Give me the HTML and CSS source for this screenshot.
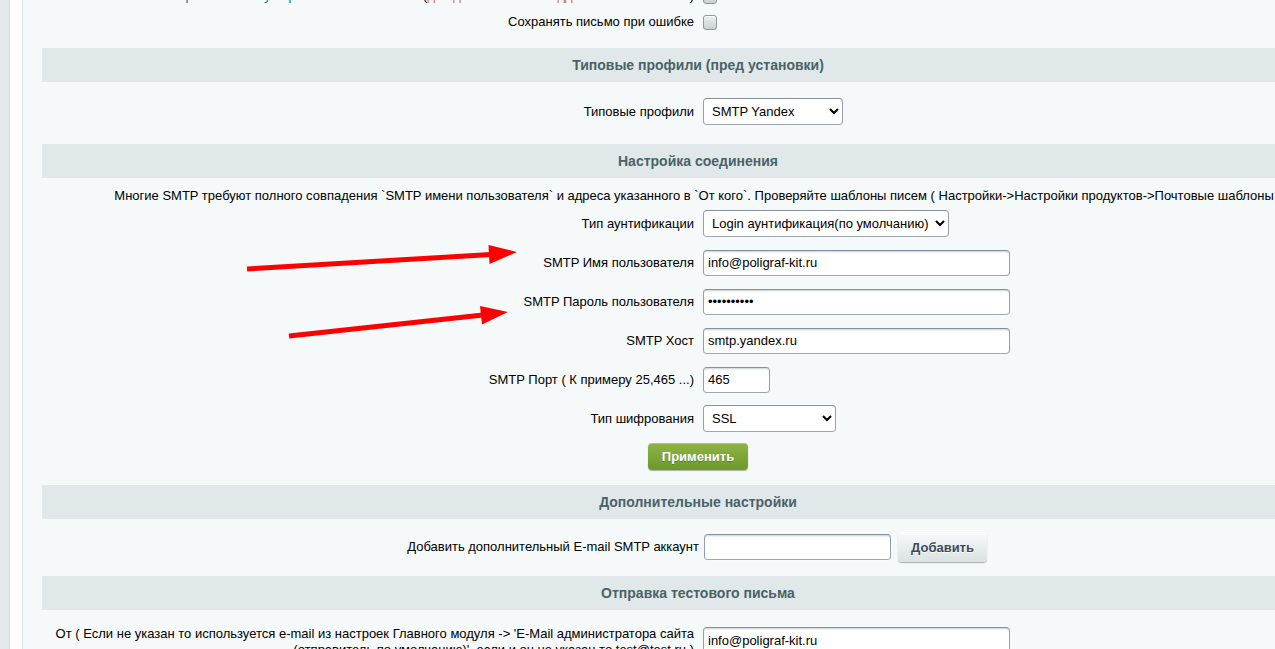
FILE: index.html
```html
<!DOCTYPE html>
<html lang="ru">
<head>
<meta charset="utf-8">
<title>SMTP</title>
<link rel="stylesheet" href="styles.css">
</head>
<body>
<div class="page">
  <div class="rail"></div>
  <div class="gutter"></div>
  <main class="workarea">
    <div class="form">
      <div class="row chk-row first">
        <div class="row-label"><span class="link">Отправлять почту через SMTP</span> все письма (<span class="warn">для домена и всех поддоменов</span> этого сайта)</div>
        <div class="row-ctl"><input type="checkbox" class="chk"></div>
      </div>
      <div class="row chk-row">
        <div class="row-label">Сохранять письмо при ошибке</div>
        <div class="row-ctl"><input type="checkbox" class="chk"></div>
      </div>

      <section class="block">
        <h2 class="section-title">Типовые профили (пред установки)</h2>
        <div class="section-body">
          <div class="row field">
            <div class="row-label">Типовые профили</div>
            <div class="row-ctl">
              <select class="sel sel-profile"><option>SMTP Yandex</option></select>
            </div>
          </div>
        </div>
      </section>

      <section class="block">
        <h2 class="section-title">Настройка соединения</h2>
        <div class="section-body">
          <p class="note">Многие SMTP требуют полного совпадения `SMTP имени пользователя` и адреса указанного в `От кого`. Проверяйте шаблоны писем ( Настройки-&gt;Настройки продуктов-&gt;Почтовые шаблоны )</p>
          <div class="row field">
            <div class="row-label">Тип аунтификации</div>
            <div class="row-ctl">
              <select class="sel sel-auth"><option>Login аунтификация(по умолчанию)</option></select>
            </div>
          </div>
          <div class="row field">
            <div class="row-label">SMTP Имя пользователя</div>
            <div class="row-ctl"><input type="text" class="txt txt-wide" value="info@poligraf-kit.ru"></div>
          </div>
          <div class="row field">
            <div class="row-label">SMTP Пароль пользователя</div>
            <div class="row-ctl"><input type="password" class="txt txt-wide" value="0123456789"></div>
          </div>
          <div class="row field">
            <div class="row-label">SMTP Хост</div>
            <div class="row-ctl"><input type="text" class="txt txt-wide" value="smtp.yandex.ru"></div>
          </div>
          <div class="row field">
            <div class="row-label">SMTP Порт ( К примеру 25,465 ...)</div>
            <div class="row-ctl"><input type="text" class="txt txt-port" value="465"></div>
          </div>
          <div class="row field">
            <div class="row-label">Тип шифрования</div>
            <div class="row-ctl">
              <select class="sel sel-enc"><option>SSL</option></select>
            </div>
          </div>
          <div class="btn-row">
            <button type="button" class="btn-save">Применить</button>
          </div>
        </div>
      </section>

      <section class="block">
        <h2 class="section-title">Дополнительные настройки</h2>
        <div class="section-body">
          <div class="row add-row">
            <div class="row-label">Добавить дополнительный E-mail SMTP аккаунт</div>
            <div class="row-ctl add-ctl">
              <input type="text" class="txt txt-add" value="">
              <button type="button" class="btn">Добавить</button>
            </div>
          </div>
        </div>
      </section>

      <section class="block">
        <h2 class="section-title">Отправка тестового письма</h2>
        <div class="section-body">
          <div class="row from-row">
            <div class="row-label">От ( Если не указан то используется e-mail из настроек Главного модуля -&gt; 'E-Mail администратора сайта (отправитель по умолчанию)', если и он не указан то test@test.ru )</div>
            <div class="row-ctl"><input type="text" class="txt txt-wide" value="info@poligraf-kit.ru"></div>
          </div>
        </div>
      </section>
    </div>
  </main>

  <svg class="annotations" width="1275" height="649" viewBox="0 0 1275 649" aria-hidden="true">
    <line x1="247" y1="269" x2="491" y2="254.5" stroke="#ff0000" stroke-width="5"/>
    <polygon points="488.5,245 517,252 489.5,264" fill="#ff0000"/>
    <line x1="289" y1="336" x2="483" y2="315" stroke="#ff0000" stroke-width="5"/>
    <polygon points="480,306 508,312 482,324.5" fill="#ff0000"/>
  </svg>
</div>
</body>
</html>
```

FILE: styles.css
```css
html, body {
  margin: 0;
  padding: 0;
  height: 100%;
  overflow: hidden;
}

body {
  font-family: "Liberation Sans", Arial, sans-serif;
  font-size: 13px;
  color: #000;
}

.page {
  position: relative;
  display: flex;
  height: 649px;
  overflow: hidden;
}

.rail {
  flex: 0 0 9px;
  background: #e3eaec;
  border-right: 1px solid #d3dbde;
}

.gutter {
  flex: 0 0 12px;
  background: #fff;
  border-right: 1px solid #d9e0e2;
}

.workarea {
  flex: 1 1 auto;
  min-width: 0;
  background: #f5f9f9;
  padding-left: 19px;
  overflow: hidden;
}

.form {
  width: 1312px;
  display: flex;
  flex-direction: column;
}

.row {
  display: grid;
  grid-template-columns: 656px 1fr;
  align-items: center;
}

.row-label {
  text-align: right;
  padding-right: 4px;
  line-height: 16px;
}

.row-ctl {
  padding-left: 5px;
  display: flex;
  align-items: center;
}

.chk-row {
  height: 26px;
}

.chk-row.first {
  margin-top: -17px;
}

.link {
  color: #2067b0;
}

.warn {
  color: #d0701c;
}

.chk {
  appearance: none;
  -webkit-appearance: none;
  margin: 0;
  width: 14px;
  height: 15px;
  border: 1px solid #8e989e;
  border-radius: 3px;
  background: linear-gradient(#eef1f2, #c8cfd3);
  box-shadow: inset 0 1px 0 #fff;
}

.section-title {
  margin: 13px 0 0;
  height: 34px;
  line-height: 34px;
  background: #e0e8ea;
  color: #4b6267;
  font-size: 14px;
  font-weight: bold;
  text-align: center;
}

.section-body {
  padding-top: 10px;
}

.note {
  margin: 0;
  line-height: 16px;
  text-align: center;
  white-space: nowrap;
}

.field {
  box-sizing: border-box;
  height: 39px;
}

.txt {
  box-sizing: border-box;
  height: 26px;
  margin: 0;
  padding: 0 5px 0 4px;
  border: 1px solid;
  border-color: #87919c #959ea9 #9ea7b1 #959ea9;
  border-radius: 4px;
  background: #fff;
  box-shadow: 0 1px 0 0 rgba(255, 255, 255, 0.3), inset 0 2px 2px -1px rgba(180, 188, 191, 0.7);
  font-family: "Liberation Sans", Arial, sans-serif;
  font-size: 13px;
  color: #000;
  outline: none;
}

.txt-wide {
  width: 307px;
}

.txt-port {
  width: 67px;
}

.txt-add {
  width: 187px;
}

.sel {
  box-sizing: border-box;
  height: 27px;
  margin: 0;
  padding: 0 2px 0 4px;
  border: 1px solid;
  border-color: #87919c #959ea9 #9ea7b1 #959ea9;
  border-radius: 4px;
  background-color: #fff;
  font-family: "Liberation Sans", Arial, sans-serif;
  font-size: 13px;
  color: #000;
}

.sel-profile {
  width: 140px;
}

.sel-auth {
  width: 246px;
}

.sel-enc {
  width: 133px;
}

.btn-row {
  display: flex;
  justify-content: center;
  padding: 5px 0 2px;
}

.btn-save {
  width: 100px;
  height: 27px;
  margin: 0;
  padding: 0;
  border: none;
  border-radius: 4px;
  background: linear-gradient(#8fb443, #6c982b);
  box-shadow: 0 1px 1px rgba(0, 0, 0, 0.3), inset 0 1px 0 rgba(255, 255, 255, 0.25);
  color: #fff;
  font-family: "Liberation Sans", Arial, sans-serif;
  font-size: 13px;
  font-weight: bold;
  text-shadow: 0 1px rgba(0, 0, 0, 0.25);
}

.add-row {
  grid-template-columns: 661px 1fr;
  padding: 3px 0 1px;
}

.add-ctl {
  padding-left: 1px;
  gap: 7px;
}

.btn {
  height: 30px;
  margin: 0;
  padding: 0 13px;
  border: none;
  border-radius: 4px;
  background: linear-gradient(#f8fafb, #d9e2e4);
  box-shadow: 0 0 1px rgba(0, 0, 0, 0.11), 0 1px 1px rgba(0, 0, 0, 0.3), inset 0 1px #fff;
  color: #3f4b54;
  font-family: "Liberation Sans", Arial, sans-serif;
  font-size: 13px;
  font-weight: bold;
  text-shadow: 0 1px rgba(255, 255, 255, 0.7);
  width: 89px;
}

.from-row {
  padding-top: 6px;
  align-items: start;
}

.from-row .row-ctl {
  padding-top: 1px;
}

.annotations {
  position: absolute;
  left: 0;
  top: 0;
  pointer-events: none;
}
```
